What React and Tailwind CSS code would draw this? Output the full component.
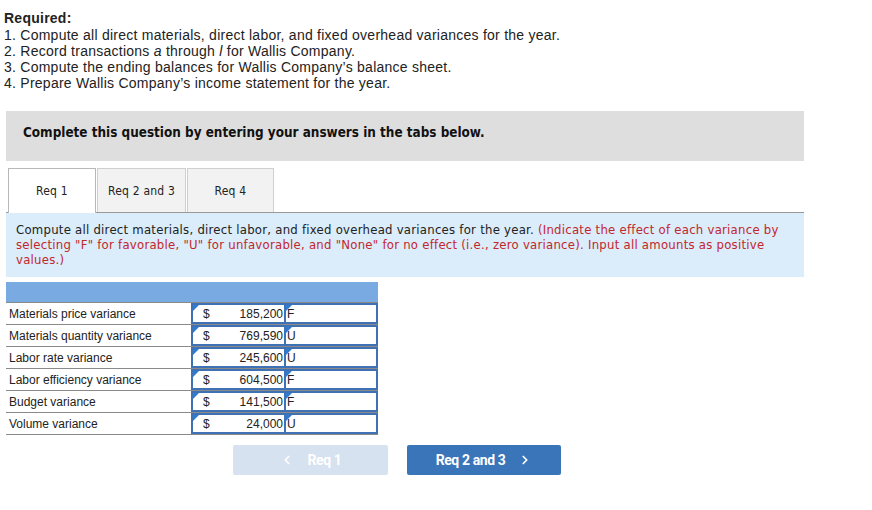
import { ChevronLeft, ChevronRight } from "lucide-react";

const rows = [
  { label: "Materials price variance", amount: "185,200", effect: "F" },
  { label: "Materials quantity variance", amount: "769,590", effect: "U" },
  { label: "Labor rate variance", amount: "245,600", effect: "U" },
  { label: "Labor efficiency variance", amount: "604,500", effect: "F" },
  { label: "Budget variance", amount: "141,500", effect: "F" },
  { label: "Volume variance", amount: "24,000", effect: "U" },
];

const tahoma = "font-['DejaVu_Sans_Condensed','DejaVu_Sans',sans-serif]";

function Marker() {
  return <span className="absolute left-0 top-0 w-0 h-0 border-t-[6px] border-t-[#2f7bd0] border-r-[6px] border-r-transparent" />;
}

export default function App() {
  return (
    <div className="w-[872px] h-[510px] bg-white relative overflow-hidden">
      <div className="pt-[10px] pl-[4px] text-[14px] leading-[16px] tracking-[0.25px] text-[#222] font-['Liberation_Sans',sans-serif]">
        <div className="font-bold mb-px">Required:</div>
        <div>1. Compute all direct materials, direct labor, and fixed overhead variances for the year.</div>
        <div>2. Record transactions <i>a</i> through <i>l</i> for Wallis Company.</div>
        <div>3. Compute the ending balances for Wallis Company’s balance sheet.</div>
        <div>4. Prepare Wallis Company’s income statement for the year.</div>
      </div>

      <div className={`ml-[6px] mt-[20px] w-[798px] h-[50px] bg-[#dedede] flex items-center pl-[17px] pb-[5px] text-[13.4px] font-bold text-[#111] ${tahoma}`}>
        Complete this question by entering your answers in the tabs below.
      </div>

      <div className={`ml-[6px] mt-[7px] w-[798px] ${tahoma}`}>
        <div className="flex items-end h-[45px] pl-[2px] border-b border-[#999]">
          <div className="w-[88px] h-[45px] bg-white border border-[#b8b8b8] border-b-0 flex items-center justify-center text-[12px] tracking-[0.2px] text-[#222] -mb-px relative z-10">Req 1</div>
          <div className="w-[89px] h-[44px] bg-[#f2f2f2] border border-[#cfcfcf] border-b-0 ml-[1px] flex items-center justify-center text-[12px] tracking-[0.2px] text-[#222]">Req 2 and 3</div>
          <div className="w-[87px] h-[44px] bg-[#f2f2f2] border border-[#cfcfcf] border-b-0 ml-[1px] flex items-center justify-center text-[12px] tracking-[0.2px] text-[#222]">Req 4</div>
        </div>
        <div className="bg-[#dbecfa] px-[10px] pt-[9px] pb-[10px] text-[13px] leading-[15px] tracking-[0.25px] text-[#222]">
          Compute all direct materials, direct labor, and fixed overhead variances for the year. <span className="text-[#c1272d]">(Indicate the effect of each variance by selecting "F" for favorable, "U" for unfavorable, and "None" for no effect (i.e., zero variance). Input all amounts as positive values.)</span>
        </div>
      </div>

      <div className="ml-[6px] mt-[5px] w-[372px] font-['Liberation_Sans',sans-serif] text-[12px] text-[#222]">
        <div className="h-[21px] bg-[#79abe2] border-b border-[#8a8a8a]" />
        {rows.map((r, i) => (
          <div key={i} className="flex h-[22px] border-b border-[#8a8a8a]">
            <div className="w-[185px] flex items-center pl-[3px]">{r.label}</div>
            <div className="w-[94px] relative flex items-center border-2 border-[#3f72b4] border-r">
              <Marker />
              <span className="pl-[10px]">$</span>
              <span className="ml-auto pr-[1px]">{r.amount}</span>
            </div>
            <div className="w-[93px] relative flex items-center border-2 border-[#3f72b4] border-l">
              <Marker />
              <span className="pl-[1px]">{r.effect}</span>
            </div>
          </div>
        ))}
      </div>

      <div className="flex ml-[233px] mt-[10px] gap-[19px] font-['Roboto',sans-serif] text-[14px] font-bold tracking-[-0.4px]">
        <div className="w-[155px] h-[30px] rounded-[2px] bg-[#d6e2f0] text-white flex items-center justify-center gap-[14px]">
          <ChevronLeft size={14} strokeWidth={3} />
          <span>Req 1</span>
        </div>
        <div className="w-[154px] h-[30px] rounded-[2px] bg-[#3a74b9] text-white flex items-center justify-center gap-[13px]">
          <span>Req 2 and 3</span>
          <ChevronRight size={14} strokeWidth={3} />
        </div>
      </div>
    </div>
  );
}
